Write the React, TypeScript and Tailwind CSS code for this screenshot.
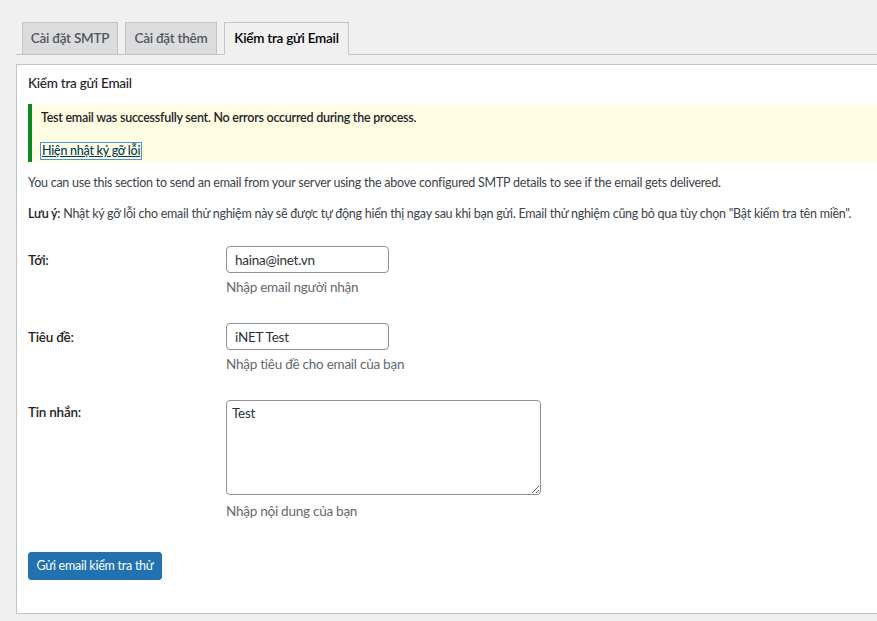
import React from "react";

function Tab({ label, width, active }: { label: string; width: string; active?: boolean }) {
  const base = `${width} h-[33px] -mb-px flex items-center justify-center whitespace-nowrap border border-[#c3c4c7] text-[13.5px] font-semibold tracking-[-0.25px]`;
  return (
    <div
      className={
        active ? `${base} border-b-[#f0f0f1] bg-[#f0f0f1] text-black` : `${base} bg-[#dcdcde] text-[#50575e]`
      }
    >
      {label}
    </div>
  );
}

const fieldClass =
  "w-[163px] h-[27px] border border-[#8c8f94] rounded-[4px] px-[8px] text-[13.5px] tracking-[-0.25px] text-[#2c3338] bg-white font-['Lato','Noto_Sans',sans-serif]";

function Row({ label, hint, value }: { label: string; hint: string; value: string }) {
  return (
    <div className="flex h-[77px]">
      <div className="w-[198px] shrink-0 pt-[19px] text-[13.5px] leading-[20px] font-semibold text-[#1d2327]">
        {label}
      </div>
      <div className="pt-[15px] flex flex-col">
        <input defaultValue={value} className={fieldClass} />
        <div className="mt-[4px] text-[13.5px] leading-[20px] text-[#646970]">{hint}</div>
      </div>
    </div>
  );
}

export default function App() {
  return (
    <div className="min-h-screen w-full bg-[#f0f0f1] overflow-hidden pl-[16px] text-[#3c434a] font-['Lato','Noto_Sans',sans-serif] tracking-[-0.25px]">
      {/* tab strip */}
      <div className="pt-[22px] border-b border-[#c3c4c7] flex gap-[7px] pl-[6px] w-[calc(100%+20px)]">
        <Tab label="Cài đặt SMTP" width="w-[96px]" />
        <Tab label="Cài đặt thêm" width="w-[92px]" />
        <Tab label="Kiểm tra gửi Email" width="w-[125px]" active />
      </div>

      {/* settings panel */}
      <div className="mt-[9px] w-[calc(100%+20px)] bg-white border border-[#c3c4c7] pl-[11px] pt-[8px] pb-[33px]">
        <h2 className="text-[13.5px] leading-[20px] text-[#1d2327] font-medium">Kiểm tra gửi Email</h2>

        <div className="mt-[11px] h-[58px] bg-[#fefde3] border-l-4 border-[#0b8a1f] pl-[9px] pt-[4px]">
          <p className="text-[12.5px] leading-[20px] font-semibold text-[#1d2327]">
            Test email was successfully sent. No errors occurred during the process.
          </p>
          <div className="mt-[9px]">
            <a
              href="#"
              className="inline-block text-[12.5px] leading-[16px] font-medium text-[#043959] underline outline outline-1 outline-[#4f94d4] px-px"
            >
              Hiện nhật ký gỡ lỗi
            </a>
          </div>
        </div>

        <p className="mt-[11px] text-[12.5px] leading-[20px] whitespace-nowrap">
          You can use this section to send an email from your server using the above configured SMTP details to see if
          the email gets delivered.
        </p>
        <p className="mt-[11px] text-[12.5px] leading-[20px] whitespace-nowrap">
          <span className="font-semibold text-[#1d2327]">Lưu ý:</span> Nhật ký gỡ lỗi cho email thử nghiệm này sẽ được
          tự động hiển thị ngay sau khi bạn gửi. Email thử nghiệm cũng bỏ qua tùy chọn "Bật kiểm tra tên miền".
        </p>

        <div className="mt-[7px]">
          <Row label="Tới:" hint="Nhập email người nhận" value="haina@inet.vn" />
          <Row label="Tiêu đề:" hint="Nhập tiêu đề cho email của bạn" value="iNET Test" />
          <div className="flex">
            <div className="w-[198px] shrink-0 pt-[17px] text-[13.5px] leading-[20px] font-semibold text-[#1d2327]">
              Tin nhắn:
            </div>
            <div className="pt-[15px] flex flex-col">
              <textarea
                defaultValue="Test"
                className="block w-[315px] h-[95px] border border-[#8c8f94] rounded-[4px] px-[5px] py-[2px] text-[13.5px] tracking-[-0.25px] leading-[20px] text-[#2c3338] bg-white font-['Lato','Noto_Sans',sans-serif]"
              />
              <div className="mt-[6px] text-[13.5px] leading-[20px] text-[#646970]">Nhập nội dung của bạn</div>
            </div>
          </div>
        </div>

        <button className="mt-[31px] h-[28px] w-[134px] whitespace-nowrap rounded-[3px] bg-[#2271b1] border border-[#2271b1] text-white text-[12.5px] tracking-[-0.25px] flex items-center justify-center font-['Lato','Noto_Sans',sans-serif]">
          Gửi email kiểm tra thử
        </button>
      </div>
    </div>
  );
}
